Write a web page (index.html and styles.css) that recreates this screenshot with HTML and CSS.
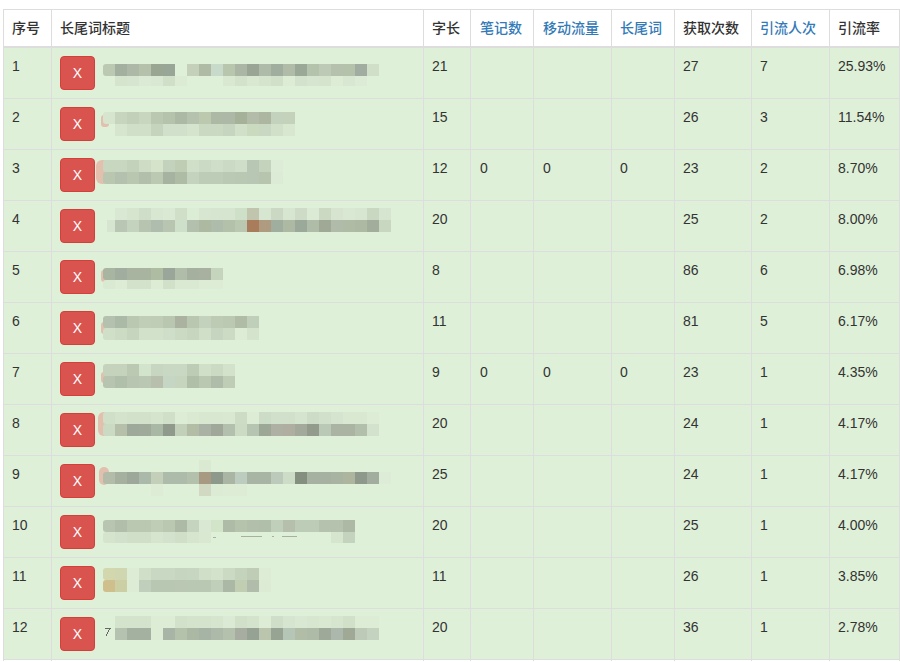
FILE: index.html
```html
<!DOCTYPE html>
<html lang="zh-CN">
<head>
<meta charset="utf-8">
<title>长尾词列表</title>
<link rel="stylesheet" href="styles.css">
</head>
<body>
<table class="data-table">
<colgroup>
<col class="c-no"><col class="c-title"><col class="c-len"><col class="c-notes"><col class="c-mobile"><col class="c-tail"><col class="c-get"><col class="c-people"><col class="c-rate">
</colgroup>
<thead>
<tr>
<th>序号</th><th>长尾词标题</th><th>字长</th><th class="shift"><a href="#">笔记数</a></th><th class="shift"><a href="#">移动流量</a></th><th><a href="#">长尾词</a></th><th>获取次数</th><th><a href="#">引流人次</a></th><th>引流率</th>
</tr>
</thead>
<tbody>
<tr class="hit"><td>1</td><td><div class="title-cell"><button class="btn-del">X</button><svg class="mosaic"></svg></div></td><td>21</td><td></td><td></td><td></td><td>27</td><td>7</td><td>25.93%</td></tr>
<tr class="hit"><td>2</td><td><div class="title-cell"><button class="btn-del">X</button><svg class="mosaic"></svg></div></td><td>15</td><td></td><td></td><td></td><td>26</td><td>3</td><td>11.54%</td></tr>
<tr class="hit"><td>3</td><td><div class="title-cell"><button class="btn-del">X</button><svg class="mosaic"></svg></div></td><td>12</td><td class="shift">0</td><td class="shift">0</td><td>0</td><td>23</td><td>2</td><td>8.70%</td></tr>
<tr class="hit"><td>4</td><td><div class="title-cell"><button class="btn-del">X</button><svg class="mosaic"></svg></div></td><td>20</td><td></td><td></td><td></td><td>25</td><td>2</td><td>8.00%</td></tr>
<tr class="hit"><td>5</td><td><div class="title-cell"><button class="btn-del">X</button><svg class="mosaic"></svg></div></td><td>8</td><td></td><td></td><td></td><td>86</td><td>6</td><td>6.98%</td></tr>
<tr class="hit"><td>6</td><td><div class="title-cell"><button class="btn-del">X</button><svg class="mosaic"></svg></div></td><td>11</td><td></td><td></td><td></td><td>81</td><td>5</td><td>6.17%</td></tr>
<tr class="hit"><td>7</td><td><div class="title-cell"><button class="btn-del">X</button><svg class="mosaic"></svg></div></td><td>9</td><td class="shift">0</td><td class="shift">0</td><td>0</td><td>23</td><td>1</td><td>4.35%</td></tr>
<tr class="hit"><td>8</td><td><div class="title-cell"><button class="btn-del">X</button><svg class="mosaic"></svg></div></td><td>20</td><td></td><td></td><td></td><td>24</td><td>1</td><td>4.17%</td></tr>
<tr class="hit"><td>9</td><td><div class="title-cell"><button class="btn-del">X</button><svg class="mosaic"></svg></div></td><td>25</td><td></td><td></td><td></td><td>24</td><td>1</td><td>4.17%</td></tr>
<tr class="hit"><td>10</td><td><div class="title-cell"><button class="btn-del">X</button><svg class="mosaic"></svg></div></td><td>20</td><td></td><td></td><td></td><td>25</td><td>1</td><td>4.00%</td></tr>
<tr class="hit"><td>11</td><td><div class="title-cell"><button class="btn-del">X</button><svg class="mosaic"></svg></div></td><td>11</td><td></td><td></td><td></td><td>26</td><td>1</td><td>3.85%</td></tr>
<tr class="hit"><td>12</td><td><div class="title-cell"><button class="btn-del">X</button><svg class="mosaic"></svg></div></td><td>20</td><td></td><td></td><td></td><td>36</td><td>1</td><td>2.78%</td></tr>
<tr class="tail"><td></td><td></td><td></td><td></td><td></td><td></td><td></td><td></td><td></td></tr>
</tbody>
</table>
<script src="mosaic.js"></script>
</body>
</html>
```
FILE: styles.css
```css
html, body {
  margin: 0;
  height: 662px;
  overflow: hidden;
  background: #fff;
}
body {
  padding: 9px 0 0 3px;
  box-sizing: border-box;
  font-family: "Liberation Sans", "Noto Sans CJK SC", sans-serif;
  font-size: 14px;
  line-height: 20px;
  color: #333;
}
.data-table {
  table-layout: fixed;
  width: 896px;
  border-collapse: collapse;
  border: 1px solid #ddd;
  border-bottom: 0;
}
.c-no { width: 48px; }
.c-title { width: 372px; }
.c-len { width: 47px; }
.c-notes { width: 63px; }
.c-mobile { width: 78px; }
.c-tail { width: 63px; }
.c-get { width: 77px; }
.c-people { width: 78px; }
.c-rate { width: 70px; }
.data-table th,
.data-table td {
  padding: 8px;
  border: 1px solid #ddd;
  text-align: left;
  vertical-align: top;
}
.data-table th {
  border-bottom-width: 2px;
  font-weight: 500;
  color: #333;
  white-space: nowrap;
}
.data-table th a {
  color: #337ab7;
  text-decoration: none;
}
.data-table .shift {
  padding-left: 9px;
}
.hit td {
  background: #dff0d8;
}
.data-table .tail td {
  height: 1px;
  padding: 0;
  border-bottom: 0;
  line-height: 0;
}
.title-cell {
  display: flex;
  align-items: flex-start;
}
.btn-del {
  flex: none;
  width: 35px;
  height: 34px;
  padding: 0;
  font: 14px/20px "Liberation Sans", sans-serif;
  color: #fff;
  background: #d9534f;
  border: 1px solid #d43f3a;
  border-radius: 4px;
}
.mosaic {
  flex: none;
  width: 300px;
  height: 34px;
  overflow: visible;
}
```
FILE: mosaic.js
```js
// Blurred-out keyword titles: each table row has pixelated lines on a shared 12px grid.
var DATA = [
 {marks:'M105 65H107', lines:[[64,103,'bcc9b2 a3b0a0 adb8a6 b5c1ab 99a692 98a697 - c5d0bb b0bba5 c8dac9 b9c6ae abb7a4 9ba596 afbba9 a0aea0 b0bca8 9aa897 b4c3ab bdcab6 b5c1ad b4c1ab a0ada0 d0dfc7'],[76,115,'d5e4cd d6e5cf dbead4 d9e8d2 cfdfc8 dbebd4 - - - d8e8d1 d2e2cb d8e8d1 d4e4cd d0e0c9 dcecd5 d3e2cc d6e5cf d4e4cd dcecd5 d8e7d1 dbebd5',10]]},
 {pink:[101,115,2,12], lines:[[112,103,'d5e5ce c7d5bf c2d0b9 c8d6c0 bac8b1 b5c3ac acb9a5 b5c2ad bcc9ae adb9a4 aeb8a6 a5b199 b2bca9 acb6a0 c2d2bd c4d2bb'],[124,115,'d5e5ce d0dfc8 d0dfc8 c5d4bd d0e0ca d0e0ca d5e5cd c9d9c2 c9d9c2 c6d5bf d1e1c9 cadabf c9d8c2 d0e0c9 d7e7d0']]},
 {pink:[96,160,7,24], lines:[[160,103,'c8d7c0 c8d7c0 c3d2ba cedcc6 d5e3ca c3d2bc bfcdb5 d0dfc8 cbdac4 cfdec9 cadac4 cfdec8 b8c7b3 c4d3bc dcecd6'],[172,103,'b9c7b0 b3c1ae b9c7b0 b2c0ab bbc9b3 a6b3a1 afbca5 c4d3bd bdccb6 bdccb7 bac9b4 b9c8b3 b8c6b4 b7c5af dcebd5']]},
 {lines:[[208,115,'d8e8d2 d6e6ce cfdec8 d7e7d1 d9e9d3 cfdfc8 dcedd6 d6e6d0 d5e5cf d5e5cf cfe0c9 c2c5ae d7e6d0 cbd9c4 d7e6d0 cedcc7 dbead4 cbd9c3 d6e4d0 d9e8d3 d6e6d0 c9d8c1 d5e5cf'],[220,107,'d5e5cf'],[220,115,'b8c6b3 c3d3bd b7c5b0 aebdae b7c5b1 cfe0ca b3c0ad adb9a1 aebcac b3c0aa bac8b2 a97c5c ae9b80 a0aea0 adb9a3 9ba99a afbca7 9fa995 b0bca9 b0bba6 adb9a3 a2ad9b c8d7c0']]},
 {pink:[101,270,2,12], lines:[[268,103,'a8b5a0 a0ad9f a9b4a0 a9b4a0 aebca2 99a699 b0bda8 a6b09f a8b19f c4d4bd'],[280,103,'d9e9d2 dcecd5 d2e2cb d2e2cb dcecd5 d0e0c9 d9e9d2 d9e9d2 dcecd5 dcecd5',9]]},
 {pink:[101,322,2,12], lines:[[316,103,'b3c1ae abb9a7 bac7b1 c0ceb8 bfcdb7 b9c7b1 acb2a0 b9c7b0 c3d2bc bdcab4 bbc8b2 b0bca6 c0cfb9'],[328,103,'cfdfc8 cbdbc4 c5d5be d1e1ca d1e1ca cfdec8 cbdac2 c6d6bf cfdfc8 c6d5bf cbdbc4 dcecd5 d3e3cc']]},
 {pink:[101,372,2,11], lines:[[364,103,'c6d3bc c6d3bc bcc9b2 d3e4cc c7d6c0 c8d8c2 c9d8c2 bdccb5 cfdfc8 cbdac3 d2e2cb'],[376,103,'b7c4af b0bfaa b8c5b0 bac8b3 b9bfad c5d7c4 c6d5be b0bfa8 bac8b2 afbcaa bfcdb7']]},
 {pink:[98,412,5,24], marks:'M279 435H288', lines:[[412,103,'cfdfc8 d4e4cc d2e2ca d2e2ca d4e4cd cfdfc8 dcecd5 d9e9d2 d7e7d0 d7e7d0 d8e8d1 ccdcc5 dcecd5 cddcc6 d1e0ca d1e0ca d5e4ce cddcc6 d1e0ca d5e4ce d8e8d1 d8e8d1 dcecd5'],[424,103,'cadac3 b5bfaa 9fa99b a0aa9a a9b8a5 8f9a8c c2cfb9 b3bda6 a9b2a4 a0a89a b3c0ad cbdbc4 b6c5b1 9da796 aeb0a3 b0aea0 a3aa9c 929b8c bac9b5 abb3a2 abb3a2 b2bfab d2e2cc']]},
 {pink:[99,467,4,18], lines:[[460,199,'d9e9d2'],[472,103,'b2bca8 a5b09f 9da79a aab9a9 c3cfb9 adbbaa adbbaa b3c0ac a89a82 8d998b aab6a3 bccdc0 a9b5a4 a9b5a4 bccabb cddcc7 858f7f a7b1a2 a7b1a2 a9b3a2 aeb59f 8f998b a2ad9f dcecd6'],[484,151,'dcecd5 - - - d2d9c3 dbebd4 dcecd5 dcecd5']]},
 {marks:'M213 537H216 M241 536H262 M272 536H274 M282 536H297', faint:true, lines:[[520,103,'b8c6b1 b1bfaa bac8b2 bac8b2 bfcdb7 bac8b2 adbaa5 c5d4be d8e8d2 d2e5c9 aebba6 b5c3ad b2c0ab b0bfaa c0cfb9 b5bfac bcccb6 bcccb6 b5c2ae b5c2ae adb9a5'],[532,103,'d4e4cd d2e1cb d0dfc8 d0dfc8 d5e5ce d3e2cc cfdfc8 d5e5ce d8e8d1 - - - - - - - - - - d5e5ce c4d3bd',11]]},
 {lines:[[568,103,'d3d7ae d0d6b0 dcecd5 cfdfc8 c9d8c2 c9d8c2 c6d5bf c7d6c0 cfdfc8 d3e3cb cbdac3 c4d3bc bfcdb6 dcecd5'],[580,103,'cebf8d cbcfa3 dcecd5 bfcfbc b8c7b2 b8c7b2 b9c7b3 b9c8b3 b9c8b3 c0cfb9 aab8a5 c2ceb2 b1bdaa dbebd4']]},
 {marks:'M105 628H111 M110 628L106 636', lines:[[616,115,'d3e3cc d3e3cc d3e3cc dcecd5 dcecd5 d1e1ca d3e3cc d3e3cc d5e5ce dbead4 d0e0c9 d3e3cc dcecd5 cfdec8 d6e5cf d9e8d2 d6e6cf d8e8d1 d5e5ce d0e0c9 dcecd5 dcecd5'],[628,115,'b4c2af a5b1a0 a5b1a0 dcecd5 a8b5a6 b4c2ab aab8a4 a6b4a5 adbaa9 b3c1ad a7ada1 96a294 bbc4ac 97a493 b5c5b6 b1bda6 adbba7 9ea99a abb8ab 9fa996 bdcab8 c4d3bf']]}
];
var NS = 'http://www.w3.org/2000/svg';
function rect(svg, x, y, w, h, fill, rx) {
  var r = document.createElementNS(NS, 'rect');
  r.setAttribute('x', x); r.setAttribute('y', y);
  r.setAttribute('width', w); r.setAttribute('height', h);
  r.setAttribute('fill', '#' + fill);
  if (rx) { r.setAttribute('rx', rx); r.setAttribute('shape-rendering', 'auto'); }
  svg.appendChild(r);
}
document.querySelectorAll('.mosaic').forEach(function (svg, i) {
  var d = DATA[i];
  svg.setAttribute('viewBox', '95 ' + (56 + 51 * i) + ' 300 34');
  svg.setAttribute('shape-rendering', 'crispEdges');
  if (d.pink) rect(svg, d.pink[0], d.pink[1], d.pink[2] + 6, d.pink[3], 'e3bfae', Math.min(d.pink[2] + 1, 6));
  if (d.marks) {
    var p = document.createElementNS(NS, 'path');
    p.setAttribute('d', d.marks);
    p.setAttribute('stroke', d.faint ? '#a9b0a2' : '#666');
    p.setAttribute('fill', 'none');
    svg.appendChild(p);
  }
  d.lines.forEach(function (l) {
    var h = l[3] || 12;
    l[2].split(' ').forEach(function (c, k) {
      if (c === '-') return;
      var x = l[1] + 12 * k;
      if (l[1] === 103 && k === 0) {
        rect(svg, x, l[0], 8, h, c, 3);
        rect(svg, x + 4, l[0], 8, h, c);
      } else {
        rect(svg, x, l[0], 12, h, c);
      }
    });
  });
});
```
